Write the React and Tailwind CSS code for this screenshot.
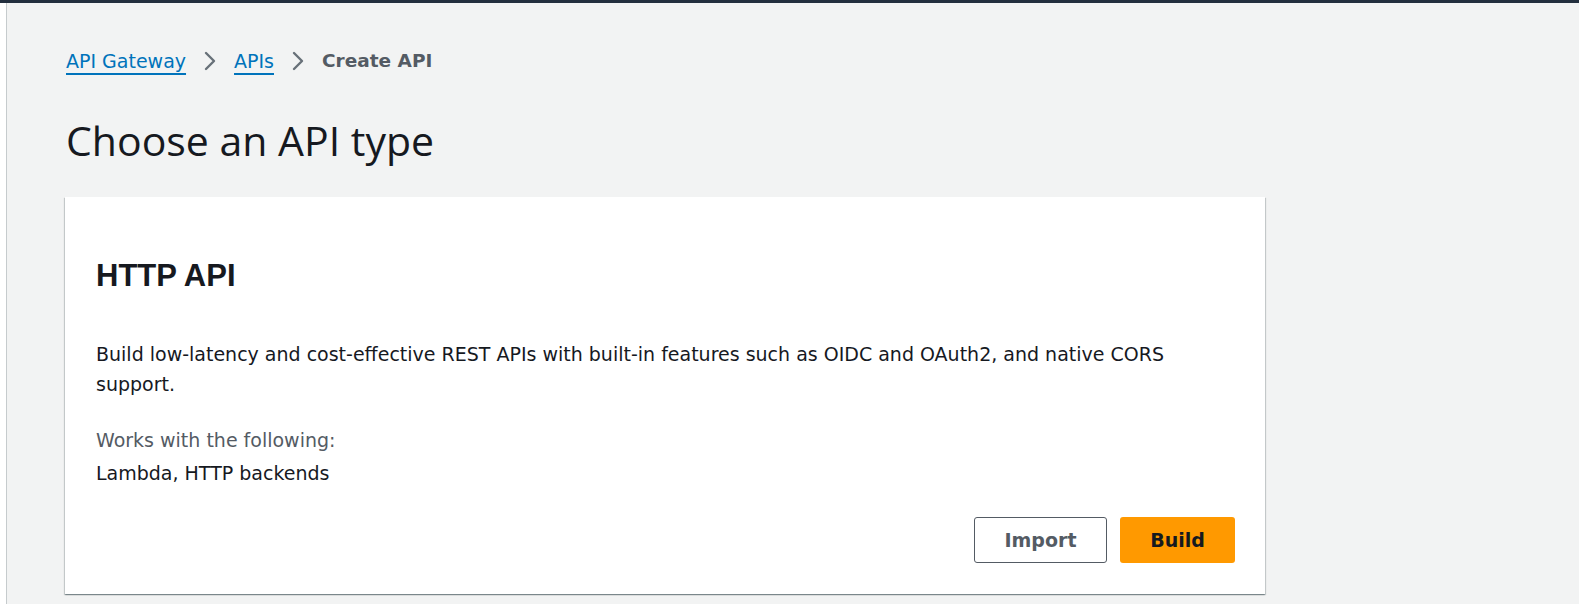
import React from 'react';

const Chevron = () => (
    <svg viewBox="0 0 12 20" className="h-[20px] w-[12px] text-[#687078]" fill="none">
        <path d="M2 2l8 8-8 8" stroke="currentColor" strokeWidth="2.4" strokeLinecap="round" strokeLinejoin="round" />
    </svg>
);

const App = () => {
    return (
        <div className="flex min-h-[604px] flex-col bg-[#f2f3f3]" style={{ fontFamily: '"DejaVu Sans", Verdana, sans-serif' }}>
            <div className="h-[3px] bg-[#232f3e]" />
            <div className="flex flex-1">
                <div className="w-[7px] border-r border-[#c6cbcd] bg-white" />
                <div className="flex-1 pl-[58px]">
                    <nav className="mt-[45px] flex items-center pl-px text-[19px] leading-[26px]">
                        <a href="#" className="text-[#0073bb] underline decoration-[2px] underline-offset-[5px]">API Gateway</a>
                        <span className="mx-[18px] flex"><Chevron /></span>
                        <a href="#" className="text-[#0073bb] underline decoration-[2px] underline-offset-[5px]">APIs</a>
                        <span className="mx-[18px] flex"><Chevron /></span>
                        <span className="text-[18.5px] font-bold text-[#545b64]">Create API</span>
                    </nav>
                    <h1 className="mt-[38px] pl-px text-[41px] leading-[56px] text-[#16191f]" style={{ fontFamily: '"Open Sans", "Noto Sans", sans-serif' }}>Choose an API type</h1>
                    <div className="mt-[29px] w-[1200px] bg-white px-[30px] pb-[31px] pt-[59px] shadow-[0_1px_1px_0_rgba(0,28,36,0.3),1px_1px_1px_0_rgba(0,28,36,0.15),-1px_1px_1px_0_rgba(0,28,36,0.15)]">
                        <h2 className="pl-px text-[31px] font-bold leading-[40px] text-[#16191f]" style={{ fontFamily: '"Liberation Sans", Arial, sans-serif' }}>HTTP API</h2>
                        <p className="mt-[43px] pl-px text-[19px] leading-[30px] text-[#16191f]">
                            Build low-latency and cost-effective REST APIs with built-in features such as OIDC and OAuth2, and native CORS support.
                        </p>
                        <div className="mt-[25px] pl-px text-[19px] leading-[33px]">
                            <div className="text-[#545b64]">Works with the following:</div>
                            <div className="text-[#16191f]">Lambda, HTTP backends</div>
                        </div>
                        <div className="mt-[27px] flex justify-end gap-[13px]">
                            <button type="button" className="h-[46px] w-[133px] rounded-[3px] border border-[#545b64] bg-white text-[19px] font-bold text-[#545b64]">
                                Import
                            </button>
                            <button type="button" className="h-[46px] w-[115px] rounded-[3px] bg-[#ff9900] text-[19px] font-bold text-[#16191f]">
                                Build
                            </button>
                        </div>
                    </div>
                </div>
            </div>
        </div>
    );
};

export default App;
